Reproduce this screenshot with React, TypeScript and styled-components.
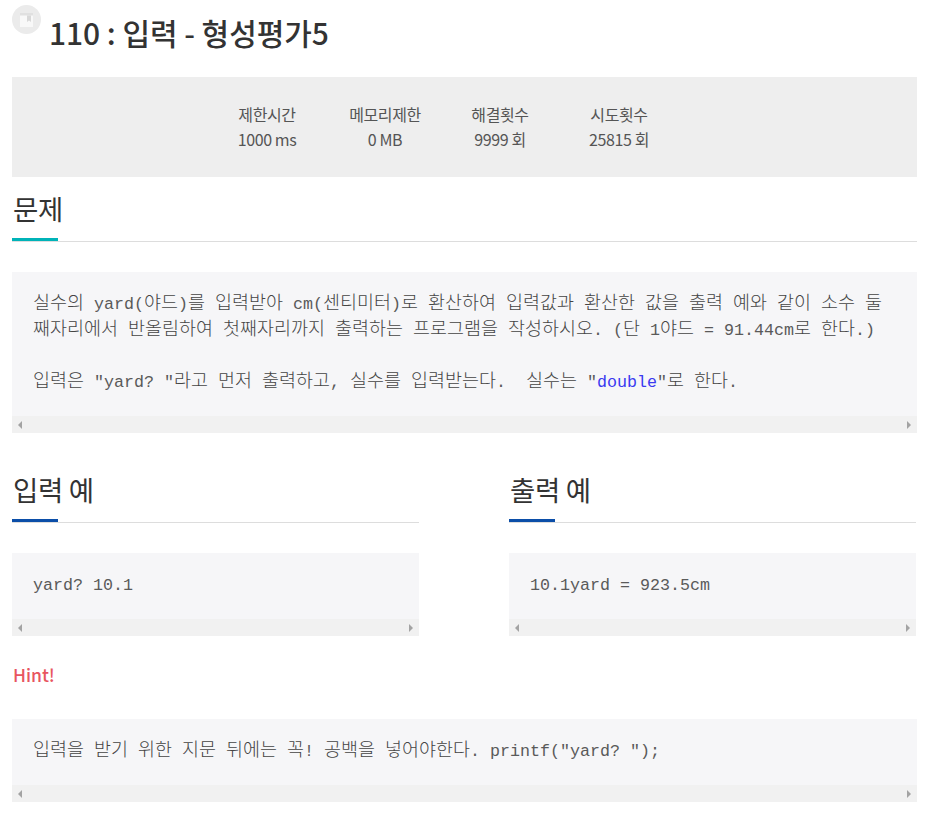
import styled, { createGlobalStyle } from "styled-components";

const GlobalStyle = createGlobalStyle`
  html, body {
    margin: 0;
    padding: 0;
    background: #fff;
  }
  body {
    font-family: "Noto Sans CJK KR", "Noto Sans", sans-serif;
    color: #333;
  }
`;

const Page = styled.div`
  width: 905px;
  padding: 5px 14px 0 12px;
`;

const TitleRow = styled.div`
  display: flex;
  align-items: flex-start;
  height: 72px;
`;

const BookBadge = styled.div`
  width: 29px;
  height: 29px;
  border-radius: 50%;
  background: #ebebeb;
  display: flex;
  align-items: center;
  justify-content: center;
  flex-shrink: 0;
`;

const Title = styled.h1`
  margin: 5px 0 0 8px;
  font-size: 30px;
  line-height: 44px;
  font-weight: 500;
  letter-spacing: -0.05px;
  color: #333;
`;

const InfoBox = styled.div`
  height: 100px;
  background: #eee;
  display: flex;
  padding-top: 25px;
  box-sizing: border-box;
`;

const InfoCol = styled.div<{ $width: number }>`
  width: ${({ $width }) => $width}px;
  text-align: center;
  font-size: 16px;
  line-height: 25px;
  letter-spacing: -0.4px;
  color: #555;
`;

const InfoSpacer = styled.div`
  width: 196px;
`;

const SectionHead = styled.div<{ $accent: string }>`
  position: relative;
  height: 64px;
  box-sizing: border-box;
  border-bottom: 1px solid #ddd;
  font-size: 27.5px;
  line-height: 38px;
  color: #333;
  padding-top: 11px;
  padding-left: 1px;
  letter-spacing: -0.3px;

  &::after {
    content: "";
    position: absolute;
    left: 0;
    bottom: 0;
    width: 46px;
    height: 3px;
    background: ${({ $accent }) => $accent};
  }
`;

const ProblemHead = styled(SectionHead)`
  height: 65px;
  padding-top: 12px;
`;

const CodeBox = styled.div<{ $top: number }>`
  margin-top: ${({ $top }) => $top}px;
  background: #f6f6f8;
`;

const Code = styled.pre`
  margin: 0;
  padding: 20px 21px 20px;
  font-family: "Liberation Mono", "Noto Sans CJK KR", monospace;
  font-size: 16.6667px;
  line-height: 26px;
  color: #5a5a5a;
  white-space: pre;
  overflow: hidden;
`;

// hangul sits on a 17px cell in the reference font, so each run gets a whole-pixel width
const Hangul = styled.span<{ $chars: number }>`
  display: inline-block;
  width: ${({ $chars }) => $chars * 17}px;
  font-family: "Noto Sans CJK KR", sans-serif;
  font-size: 18.4783px;
  line-height: 0;
  font-weight: 300;
  color: #444;
`;

const Keyword = styled.span`
  color: #3a3af0;
`;

const ScrollTrack = styled.div`
  height: 17px;
  background: #f1f1f1;
  display: flex;
  align-items: center;
  justify-content: space-between;
  padding: 0 6px;
`;

const ArrowLeft = styled.span`
  width: 0;
  height: 0;
  border-top: 4px solid transparent;
  border-bottom: 4px solid transparent;
  border-right: 4px solid #a3a3a3;
`;

const ArrowRight = styled.span`
  width: 0;
  height: 0;
  border-top: 4px solid transparent;
  border-bottom: 4px solid transparent;
  border-left: 4px solid #a3a3a3;
`;

const Columns = styled.div`
  display: grid;
  grid-template-columns: 407px 407px;
  column-gap: 90px;
  margin-top: 26px;
`;

const HintTitle = styled.div`
  margin-top: 26px;
  padding-left: 1px;
  height: 57px;
  font-size: 17.5px;
  line-height: 26px;
  font-weight: 500;
  color: #e8555f;
`;

const Scrollbar = () => (
  <ScrollTrack>
    <ArrowLeft />
    <ArrowRight />
  </ScrollTrack>
);

const Mixed = ({ text }: { text: string }) => (
  <>
    {text.split(/([가-힣]+)/).map((part, i) =>
      i % 2 ? (
        <Hangul key={i} $chars={part.length}>
          {part}
        </Hangul>
      ) : (
        part
      ),
    )}
  </>
);

export default function App() {
  return (
    <>
      <GlobalStyle />
      <Page>
        <TitleRow>
          <BookBadge>
            <svg width="15" height="16" viewBox="0 0 15 16">
              <path d="M1 1h13v14H1z" fill="#f8f8f8" />
              <path d="M1 1h13v2.5H1z" fill="#e0e0e0" />
              <path d="M8 3.5h4v6.5L10 8.4 8 10z" fill="#d8d8d8" />
            </svg>
          </BookBadge>
          <Title>110 : 입력 - 형성평가5</Title>
        </TitleRow>

        <InfoBox>
          <InfoSpacer />
          <InfoCol $width={118}>
            제한시간
            <br />
            1000 ms
          </InfoCol>
          <InfoCol $width={118}>
            메모리제한
            <br />0 MB
          </InfoCol>
          <InfoCol $width={112}>
            해결횟수
            <br />
            9999 회
          </InfoCol>
          <InfoCol $width={126}>
            시도횟수
            <br />
            25815 회
          </InfoCol>
        </InfoBox>

        <ProblemHead $accent="#00b3b8">문제</ProblemHead>
        <CodeBox $top={30}>
          <Code>
            <Mixed
              text={`실수의 yard(야드)를 입력받아 cm(센티미터)로 환산하여 입력값과 환산한 값을 출력 예와 같이 소수 둘
째자리에서 반올림하여 첫째자리까지 출력하는 프로그램을 작성하시오. (단 1야드 = 91.44cm로 한다.)

입력은 "yard? "라고 먼저 출력하고, 실수를 입력받는다.  실수는 "`}
            />
            <Keyword>double</Keyword>
            <Mixed text={`"로 한다.`} />
          </Code>
          <Scrollbar />
        </CodeBox>

        <Columns>
          <div>
            <SectionHead $accent="#0b4ea8">입력 예</SectionHead>
            <CodeBox $top={30}>
              <Code>yard? 10.1</Code>
              <Scrollbar />
            </CodeBox>
          </div>
          <div>
            <SectionHead $accent="#0b4ea8">출력 예</SectionHead>
            <CodeBox $top={30}>
              <Code>10.1yard = 923.5cm</Code>
              <Scrollbar />
            </CodeBox>
          </div>
        </Columns>

        <HintTitle>Hint!</HintTitle>
        <CodeBox $top={0}>
          <Code>
            <Mixed text={`입력을 받기 위한 지문 뒤에는 꼭! 공백을 넣어야한다. printf("yard? ");`} />
          </Code>
          <Scrollbar />
        </CodeBox>
      </Page>
    </>
  );
}
